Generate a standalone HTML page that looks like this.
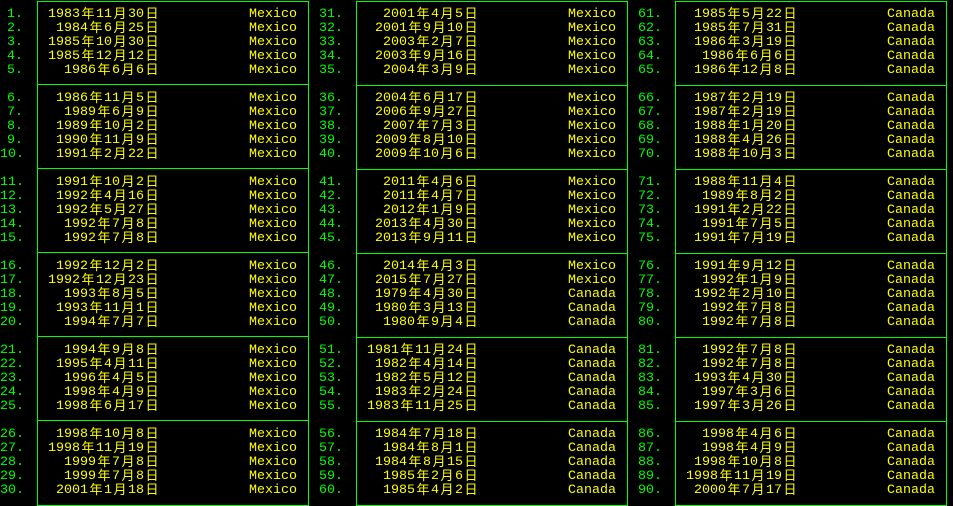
<!DOCTYPE html>
<html><head><meta charset="utf-8"><style>
html,body{margin:0;padding:0;background:#000;width:953px;height:506px;overflow:hidden}
body{position:relative;font-family:"Liberation Mono","Noto Sans CJK SC",monospace;font-size:13.33px;}
.c{position:absolute;top:0;width:319px;height:506px;overflow:hidden}
.box{position:absolute;left:37px;top:1px;width:270px;height:505px;border:1px solid #00ff00;border-bottom:none;box-sizing:content-box}
.hl{position:absolute;left:37px;width:272px;height:1px;background:#00ff00}
.g{position:absolute;left:0;width:319px;padding-top:8px}
.r{position:relative;height:14px;line-height:14px;white-space:nowrap}
b,s,u{position:absolute;top:0;height:14px;line-height:14px;font-weight:normal;text-decoration:none}
b{left:0;width:23px;text-align:right;color:#00ff00}
s{left:20px;width:140px;text-align:right;color:#ffff00}
u{left:249px;color:#ffff00}
i{display:inline-block;width:16px;height:14px;line-height:14px;vertical-align:top;position:relative;top:-2px;text-align:center;font-style:normal;font-family:"Noto Sans CJK SC",sans-serif;font-size:13px}
</style></head><body>

<div class="c" style="left:0">
<div class="box"></div>
<div class="hl" style="top:84px"></div><div class="hl" style="top:168px"></div><div class="hl" style="top:252px"></div><div class="hl" style="top:336px"></div><div class="hl" style="top:420px"></div><div class="hl" style="top:505px"></div>
<div class="g" style="top:0">
<div class="r"><b>1.</b><s>1983<i>年</i>11<i>月</i>30<i>日</i></s><u>Mexico</u></div>
<div class="r"><b>2.</b><s>1984<i>年</i>6<i>月</i>25<i>日</i></s><u>Mexico</u></div>
<div class="r"><b>3.</b><s>1985<i>年</i>10<i>月</i>30<i>日</i></s><u>Mexico</u></div>
<div class="r"><b>4.</b><s>1985<i>年</i>12<i>月</i>12<i>日</i></s><u>Mexico</u></div>
<div class="r"><b>5.</b><s>1986<i>年</i>6<i>月</i>6<i>日</i></s><u>Mexico</u></div>
</div>
<div class="g" style="top:84px">
<div class="r"><b>6.</b><s>1986<i>年</i>11<i>月</i>5<i>日</i></s><u>Mexico</u></div>
<div class="r"><b>7.</b><s>1989<i>年</i>6<i>月</i>9<i>日</i></s><u>Mexico</u></div>
<div class="r"><b>8.</b><s>1989<i>年</i>10<i>月</i>2<i>日</i></s><u>Mexico</u></div>
<div class="r"><b>9.</b><s>1990<i>年</i>11<i>月</i>9<i>日</i></s><u>Mexico</u></div>
<div class="r"><b>10.</b><s>1991<i>年</i>2<i>月</i>22<i>日</i></s><u>Mexico</u></div>
</div>
<div class="g" style="top:168px">
<div class="r"><b>11.</b><s>1991<i>年</i>10<i>月</i>2<i>日</i></s><u>Mexico</u></div>
<div class="r"><b>12.</b><s>1992<i>年</i>4<i>月</i>16<i>日</i></s><u>Mexico</u></div>
<div class="r"><b>13.</b><s>1992<i>年</i>5<i>月</i>27<i>日</i></s><u>Mexico</u></div>
<div class="r"><b>14.</b><s>1992<i>年</i>7<i>月</i>8<i>日</i></s><u>Mexico</u></div>
<div class="r"><b>15.</b><s>1992<i>年</i>7<i>月</i>8<i>日</i></s><u>Mexico</u></div>
</div>
<div class="g" style="top:252px">
<div class="r"><b>16.</b><s>1992<i>年</i>12<i>月</i>2<i>日</i></s><u>Mexico</u></div>
<div class="r"><b>17.</b><s>1992<i>年</i>12<i>月</i>23<i>日</i></s><u>Mexico</u></div>
<div class="r"><b>18.</b><s>1993<i>年</i>8<i>月</i>5<i>日</i></s><u>Mexico</u></div>
<div class="r"><b>19.</b><s>1993<i>年</i>11<i>月</i>1<i>日</i></s><u>Mexico</u></div>
<div class="r"><b>20.</b><s>1994<i>年</i>7<i>月</i>7<i>日</i></s><u>Mexico</u></div>
</div>
<div class="g" style="top:336px">
<div class="r"><b>21.</b><s>1994<i>年</i>9<i>月</i>8<i>日</i></s><u>Mexico</u></div>
<div class="r"><b>22.</b><s>1995<i>年</i>4<i>月</i>11<i>日</i></s><u>Mexico</u></div>
<div class="r"><b>23.</b><s>1996<i>年</i>4<i>月</i>5<i>日</i></s><u>Mexico</u></div>
<div class="r"><b>24.</b><s>1998<i>年</i>4<i>月</i>9<i>日</i></s><u>Mexico</u></div>
<div class="r"><b>25.</b><s>1998<i>年</i>6<i>月</i>17<i>日</i></s><u>Mexico</u></div>
</div>
<div class="g" style="top:420px">
<div class="r"><b>26.</b><s>1998<i>年</i>10<i>月</i>8<i>日</i></s><u>Mexico</u></div>
<div class="r"><b>27.</b><s>1998<i>年</i>11<i>月</i>19<i>日</i></s><u>Mexico</u></div>
<div class="r"><b>28.</b><s>1999<i>年</i>7<i>月</i>8<i>日</i></s><u>Mexico</u></div>
<div class="r"><b>29.</b><s>1999<i>年</i>7<i>月</i>8<i>日</i></s><u>Mexico</u></div>
<div class="r"><b>30.</b><s>2001<i>年</i>1<i>月</i>18<i>日</i></s><u>Mexico</u></div>
</div>
</div>

<div class="c" style="left:319px">
<div class="box"></div>
<div class="hl" style="top:85px"></div><div class="hl" style="top:169px"></div><div class="hl" style="top:253px"></div><div class="hl" style="top:337px"></div><div class="hl" style="top:421px"></div><div class="hl" style="top:505px"></div>
<div class="g" style="top:0">
<div class="r"><b>31.</b><s>2001<i>年</i>4<i>月</i>5<i>日</i></s><u>Mexico</u></div>
<div class="r"><b>32.</b><s>2001<i>年</i>9<i>月</i>10<i>日</i></s><u>Mexico</u></div>
<div class="r"><b>33.</b><s>2003<i>年</i>2<i>月</i>7<i>日</i></s><u>Mexico</u></div>
<div class="r"><b>34.</b><s>2003<i>年</i>9<i>月</i>16<i>日</i></s><u>Mexico</u></div>
<div class="r"><b>35.</b><s>2004<i>年</i>3<i>月</i>9<i>日</i></s><u>Mexico</u></div>
</div>
<div class="g" style="top:84px">
<div class="r"><b>36.</b><s>2004<i>年</i>6<i>月</i>17<i>日</i></s><u>Mexico</u></div>
<div class="r"><b>37.</b><s>2006<i>年</i>9<i>月</i>27<i>日</i></s><u>Mexico</u></div>
<div class="r"><b>38.</b><s>2007<i>年</i>7<i>月</i>3<i>日</i></s><u>Mexico</u></div>
<div class="r"><b>39.</b><s>2009<i>年</i>8<i>月</i>10<i>日</i></s><u>Mexico</u></div>
<div class="r"><b>40.</b><s>2009<i>年</i>10<i>月</i>6<i>日</i></s><u>Mexico</u></div>
</div>
<div class="g" style="top:168px">
<div class="r"><b>41.</b><s>2011<i>年</i>4<i>月</i>6<i>日</i></s><u>Mexico</u></div>
<div class="r"><b>42.</b><s>2011<i>年</i>4<i>月</i>7<i>日</i></s><u>Mexico</u></div>
<div class="r"><b>43.</b><s>2012<i>年</i>1<i>月</i>9<i>日</i></s><u>Mexico</u></div>
<div class="r"><b>44.</b><s>2013<i>年</i>4<i>月</i>30<i>日</i></s><u>Mexico</u></div>
<div class="r"><b>45.</b><s>2013<i>年</i>9<i>月</i>11<i>日</i></s><u>Mexico</u></div>
</div>
<div class="g" style="top:252px">
<div class="r"><b>46.</b><s>2014<i>年</i>4<i>月</i>3<i>日</i></s><u>Mexico</u></div>
<div class="r"><b>47.</b><s>2015<i>年</i>7<i>月</i>27<i>日</i></s><u>Mexico</u></div>
<div class="r"><b>48.</b><s>1979<i>年</i>4<i>月</i>30<i>日</i></s><u>Canada</u></div>
<div class="r"><b>49.</b><s>1980<i>年</i>3<i>月</i>13<i>日</i></s><u>Canada</u></div>
<div class="r"><b>50.</b><s>1980<i>年</i>9<i>月</i>4<i>日</i></s><u>Canada</u></div>
</div>
<div class="g" style="top:336px">
<div class="r"><b>51.</b><s>1981<i>年</i>11<i>月</i>24<i>日</i></s><u>Canada</u></div>
<div class="r"><b>52.</b><s>1982<i>年</i>4<i>月</i>14<i>日</i></s><u>Canada</u></div>
<div class="r"><b>53.</b><s>1982<i>年</i>5<i>月</i>12<i>日</i></s><u>Canada</u></div>
<div class="r"><b>54.</b><s>1983<i>年</i>2<i>月</i>24<i>日</i></s><u>Canada</u></div>
<div class="r"><b>55.</b><s>1983<i>年</i>11<i>月</i>25<i>日</i></s><u>Canada</u></div>
</div>
<div class="g" style="top:420px">
<div class="r"><b>56.</b><s>1984<i>年</i>7<i>月</i>18<i>日</i></s><u>Canada</u></div>
<div class="r"><b>57.</b><s>1984<i>年</i>8<i>月</i>1<i>日</i></s><u>Canada</u></div>
<div class="r"><b>58.</b><s>1984<i>年</i>8<i>月</i>15<i>日</i></s><u>Canada</u></div>
<div class="r"><b>59.</b><s>1985<i>年</i>2<i>月</i>6<i>日</i></s><u>Canada</u></div>
<div class="r"><b>60.</b><s>1985<i>年</i>4<i>月</i>2<i>日</i></s><u>Canada</u></div>
</div>
</div>

<div class="c" style="left:638px">
<div class="box"></div>
<div class="hl" style="top:85px"></div><div class="hl" style="top:169px"></div><div class="hl" style="top:253px"></div><div class="hl" style="top:337px"></div><div class="hl" style="top:421px"></div><div class="hl" style="top:505px"></div>
<div class="g" style="top:0">
<div class="r"><b>61.</b><s>1985<i>年</i>5<i>月</i>22<i>日</i></s><u>Canada</u></div>
<div class="r"><b>62.</b><s>1985<i>年</i>7<i>月</i>31<i>日</i></s><u>Canada</u></div>
<div class="r"><b>63.</b><s>1986<i>年</i>3<i>月</i>19<i>日</i></s><u>Canada</u></div>
<div class="r"><b>64.</b><s>1986<i>年</i>6<i>月</i>6<i>日</i></s><u>Canada</u></div>
<div class="r"><b>65.</b><s>1986<i>年</i>12<i>月</i>8<i>日</i></s><u>Canada</u></div>
</div>
<div class="g" style="top:84px">
<div class="r"><b>66.</b><s>1987<i>年</i>2<i>月</i>19<i>日</i></s><u>Canada</u></div>
<div class="r"><b>67.</b><s>1987<i>年</i>2<i>月</i>19<i>日</i></s><u>Canada</u></div>
<div class="r"><b>68.</b><s>1988<i>年</i>1<i>月</i>20<i>日</i></s><u>Canada</u></div>
<div class="r"><b>69.</b><s>1988<i>年</i>4<i>月</i>26<i>日</i></s><u>Canada</u></div>
<div class="r"><b>70.</b><s>1988<i>年</i>10<i>月</i>3<i>日</i></s><u>Canada</u></div>
</div>
<div class="g" style="top:168px">
<div class="r"><b>71.</b><s>1988<i>年</i>11<i>月</i>4<i>日</i></s><u>Canada</u></div>
<div class="r"><b>72.</b><s>1989<i>年</i>8<i>月</i>2<i>日</i></s><u>Canada</u></div>
<div class="r"><b>73.</b><s>1991<i>年</i>2<i>月</i>22<i>日</i></s><u>Canada</u></div>
<div class="r"><b>74.</b><s>1991<i>年</i>7<i>月</i>5<i>日</i></s><u>Canada</u></div>
<div class="r"><b>75.</b><s>1991<i>年</i>7<i>月</i>19<i>日</i></s><u>Canada</u></div>
</div>
<div class="g" style="top:252px">
<div class="r"><b>76.</b><s>1991<i>年</i>9<i>月</i>12<i>日</i></s><u>Canada</u></div>
<div class="r"><b>77.</b><s>1992<i>年</i>1<i>月</i>9<i>日</i></s><u>Canada</u></div>
<div class="r"><b>78.</b><s>1992<i>年</i>2<i>月</i>10<i>日</i></s><u>Canada</u></div>
<div class="r"><b>79.</b><s>1992<i>年</i>7<i>月</i>8<i>日</i></s><u>Canada</u></div>
<div class="r"><b>80.</b><s>1992<i>年</i>7<i>月</i>8<i>日</i></s><u>Canada</u></div>
</div>
<div class="g" style="top:336px">
<div class="r"><b>81.</b><s>1992<i>年</i>7<i>月</i>8<i>日</i></s><u>Canada</u></div>
<div class="r"><b>82.</b><s>1992<i>年</i>7<i>月</i>8<i>日</i></s><u>Canada</u></div>
<div class="r"><b>83.</b><s>1993<i>年</i>4<i>月</i>30<i>日</i></s><u>Canada</u></div>
<div class="r"><b>84.</b><s>1997<i>年</i>3<i>月</i>6<i>日</i></s><u>Canada</u></div>
<div class="r"><b>85.</b><s>1997<i>年</i>3<i>月</i>26<i>日</i></s><u>Canada</u></div>
</div>
<div class="g" style="top:420px">
<div class="r"><b>86.</b><s>1998<i>年</i>4<i>月</i>6<i>日</i></s><u>Canada</u></div>
<div class="r"><b>87.</b><s>1998<i>年</i>4<i>月</i>9<i>日</i></s><u>Canada</u></div>
<div class="r"><b>88.</b><s>1998<i>年</i>10<i>月</i>8<i>日</i></s><u>Canada</u></div>
<div class="r"><b>89.</b><s>1998<i>年</i>11<i>月</i>19<i>日</i></s><u>Canada</u></div>
<div class="r"><b>90.</b><s>2000<i>年</i>7<i>月</i>17<i>日</i></s><u>Canada</u></div>
</div>
</div>
</body></html>
